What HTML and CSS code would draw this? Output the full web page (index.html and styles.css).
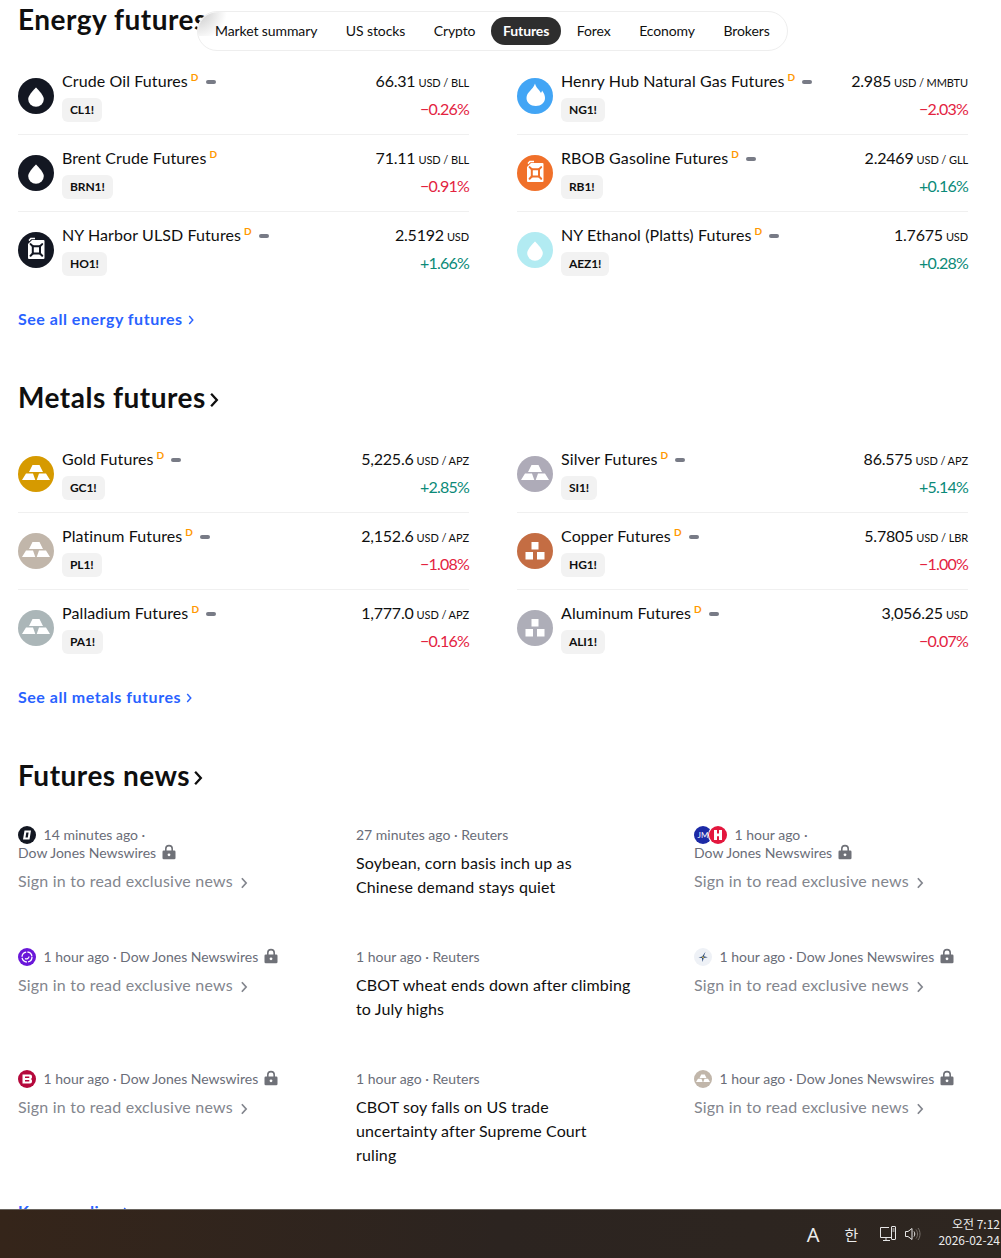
FILE: index.html
```html
<!DOCTYPE html>
<html lang="en">
<head>
<meta charset="utf-8">
<title>Futures</title>
<link rel="stylesheet" href="styles.css">
</head>
<body>
<svg class="defs" width="0" height="0">
	<symbol id="drop" viewBox="0 0 36 36">
		<circle cx="18" cy="18" r="18" fill="currentColor"/>
		<path fill="#fff" d="M18 9.500C18 9.500 25.800 16.800 25.800 21A7.800 7.800 0 0 1 10.200 21C10.200 16.800 18 9.500 18 9.500Z"/>
	</symbol>
	<symbol id="flame" viewBox="0 0 36 36">
		<circle cx="18" cy="18" r="18" fill="currentColor"/>
		<path fill="#fff" d="M18 5.500C19 10 22 11 24 15C24.500 14 25 13.500 25 12.500C27 15 28 17.500 28 20C28 24.500 24 28 18.800 28C13.500 28 9.500 24.500 9.500 20C9.500 14 16 12 18 5.500Z"/>
	</symbol>
	<symbol id="can" viewBox="0 0 36 36">
		<circle cx="18" cy="18" r="18" fill="currentColor"/>
		<path fill="#fff" d="M14 8H25.500A1 1 0 0 1 26.500 9V26A1 1 0 0 1 25.500 27H11A1 1 0 0 1 10 26V12Z"/>
		<path fill="#fff" d="M10.500 8L12.500 5.800H17V7.200H13.200L11.500 9.200Z"/>
		<g fill="none" stroke="currentColor" stroke-width="2">
			<path d="M14.800 14.300H22V21.500H14.800Z"/>
			<path d="M14.800 14.300L12.600 12.100M22 14.300L24.200 12.100M14.800 21.500L12.600 23.700M22 21.500L24.200 23.700" stroke-linecap="round"/>
		</g>
	</symbol>
	<symbol id="bars" viewBox="0 0 36 36">
		<circle cx="18" cy="18" r="18" fill="currentColor"/>
		<path fill="#fff" d="M14.500 9H21.500L25 16H11ZM8 17.500H15L17.300 24H4ZM21 17.500H28L32 24H18.700Z"/>
	</symbol>
	<symbol id="blocks" viewBox="0 0 36 36">
		<circle cx="18" cy="18" r="18" fill="currentColor"/>
		<path fill="#fff" d="M14.500 9H21.500V16.500H14.500ZM8.500 19H16V26.500H8.500ZM20 19H27.500V26.500H20Z"/>
	</symbol>
	<symbol id="lock" viewBox="0 0 14 16">
		<path fill="#6f7178" d="M3 6.500V4.800A4 4 0 0 1 11 4.800V6.500H12.200A1.300 1.300 0 0 1 13.500 7.800V14A1.300 1.300 0 0 1 12.200 15.300H1.800A1.300 1.300 0 0 1 .5 14V7.800A1.300 1.300 0 0 1 1.800 6.500ZM4.600 6.500H9.400V4.800A2.400 2.400 0 0 0 4.600 4.800Z"/>
		<circle cx="7" cy="10.800" r="1.400" fill="#fff"/>
	</symbol>
	<symbol id="chev" viewBox="0 0 8 14">
		<path fill="none" stroke="currentColor" stroke-width="2" d="M1.500 1.500L6.500 7L1.500 12.500"/>
	</symbol>
</svg>

<main class="page">
	<h2 class="heading">Energy futures<svg class="heading-arrow"><use href="#chev"/></svg></h2>
	<div class="rows">
		<div class="row">
			<svg class="icon c-black"><use href="#drop"/></svg>
			<div class="info">
				<div class="name-line"><span class="name">Crude Oil Futures</span><sup class="delay">D</sup><i class="dash"></i></div>
				<span class="chip">CL1!</span>
			</div>
			<div class="nums">
				<div class="price">66.31<span class="unit">USD / BLL</span></div>
				<div class="change down">−0.26%</div>
			</div>
		</div>
		<div class="row">
			<svg class="icon c-blue"><use href="#flame"/></svg>
			<div class="info">
				<div class="name-line"><span class="name">Henry Hub Natural Gas Futures</span><sup class="delay">D</sup><i class="dash"></i></div>
				<span class="chip">NG1!</span>
			</div>
			<div class="nums">
				<div class="price">2.985<span class="unit">USD / MMBTU</span></div>
				<div class="change down">−2.03%</div>
			</div>
		</div>
		<div class="row">
			<svg class="icon c-black"><use href="#drop"/></svg>
			<div class="info">
				<div class="name-line"><span class="name">Brent Crude Futures</span><sup class="delay">D</sup></div>
				<span class="chip">BRN1!</span>
			</div>
			<div class="nums">
				<div class="price">71.11<span class="unit">USD / BLL</span></div>
				<div class="change down">−0.91%</div>
			</div>
		</div>
		<div class="row">
			<svg class="icon c-orange"><use href="#can"/></svg>
			<div class="info">
				<div class="name-line"><span class="name">RBOB Gasoline Futures</span><sup class="delay">D</sup><i class="dash"></i></div>
				<span class="chip">RB1!</span>
			</div>
			<div class="nums">
				<div class="price">2.2469<span class="unit">USD / GLL</span></div>
				<div class="change up">+0.16%</div>
			</div>
		</div>
		<div class="row">
			<svg class="icon c-black"><use href="#can"/></svg>
			<div class="info">
				<div class="name-line"><span class="name">NY Harbor ULSD Futures</span><sup class="delay">D</sup><i class="dash"></i></div>
				<span class="chip">HO1!</span>
			</div>
			<div class="nums">
				<div class="price">2.5192<span class="unit">USD</span></div>
				<div class="change up">+1.66%</div>
			</div>
		</div>
		<div class="row">
			<svg class="icon c-cyan"><use href="#drop"/></svg>
			<div class="info">
				<div class="name-line"><span class="name">NY Ethanol (Platts) Futures</span><sup class="delay">D</sup><i class="dash"></i></div>
				<span class="chip">AEZ1!</span>
			</div>
			<div class="nums">
				<div class="price">1.7675<span class="unit">USD</span></div>
				<div class="change up">+0.28%</div>
			</div>
		</div>
	</div>
	<a class="see-all">See all energy futures<svg class="link-arrow"><use href="#chev"/></svg></a>

	<h2 class="heading">Metals futures<svg class="heading-arrow"><use href="#chev"/></svg></h2>
	<div class="rows">
		<div class="row">
			<svg class="icon c-gold"><use href="#bars"/></svg>
			<div class="info">
				<div class="name-line"><span class="name">Gold Futures</span><sup class="delay">D</sup><i class="dash"></i></div>
				<span class="chip">GC1!</span>
			</div>
			<div class="nums">
				<div class="price">5,225.6<span class="unit">USD / APZ</span></div>
				<div class="change up">+2.85%</div>
			</div>
		</div>
		<div class="row">
			<svg class="icon c-silver"><use href="#bars"/></svg>
			<div class="info">
				<div class="name-line"><span class="name">Silver Futures</span><sup class="delay">D</sup><i class="dash"></i></div>
				<span class="chip">SI1!</span>
			</div>
			<div class="nums">
				<div class="price">86.575<span class="unit">USD / APZ</span></div>
				<div class="change up">+5.14%</div>
			</div>
		</div>
		<div class="row">
			<svg class="icon c-platinum"><use href="#bars"/></svg>
			<div class="info">
				<div class="name-line"><span class="name">Platinum Futures</span><sup class="delay">D</sup><i class="dash"></i></div>
				<span class="chip">PL1!</span>
			</div>
			<div class="nums">
				<div class="price">2,152.6<span class="unit">USD / APZ</span></div>
				<div class="change down">−1.08%</div>
			</div>
		</div>
		<div class="row">
			<svg class="icon c-copper"><use href="#blocks"/></svg>
			<div class="info">
				<div class="name-line"><span class="name">Copper Futures</span><sup class="delay">D</sup><i class="dash"></i></div>
				<span class="chip">HG1!</span>
			</div>
			<div class="nums">
				<div class="price">5.7805<span class="unit">USD / LBR</span></div>
				<div class="change down">−1.00%</div>
			</div>
		</div>
		<div class="row">
			<svg class="icon c-palladium"><use href="#bars"/></svg>
			<div class="info">
				<div class="name-line"><span class="name">Palladium Futures</span><sup class="delay">D</sup><i class="dash"></i></div>
				<span class="chip">PA1!</span>
			</div>
			<div class="nums">
				<div class="price">1,777.0<span class="unit">USD / APZ</span></div>
				<div class="change down">−0.16%</div>
			</div>
		</div>
		<div class="row">
			<svg class="icon c-alu"><use href="#blocks"/></svg>
			<div class="info">
				<div class="name-line"><span class="name">Aluminum Futures</span><sup class="delay">D</sup><i class="dash"></i></div>
				<span class="chip">ALI1!</span>
			</div>
			<div class="nums">
				<div class="price">3,056.25<span class="unit">USD</span></div>
				<div class="change down">−0.07%</div>
			</div>
		</div>
	</div>
	<a class="see-all">See all metals futures<svg class="link-arrow"><use href="#chev"/></svg></a>

	<h2 class="heading">Futures news<svg class="heading-arrow"><use href="#chev"/></svg></h2>
	<div class="news">
		<div class="story">
			<div class="meta">
				<svg class="logo" viewBox="0 0 18 18"><circle cx="9" cy="9" r="9" fill="#131722"/><path fill="#fff" d="M6.500 4.500H13L11.500 13.500H5ZM8.300 6.500L7.500 11.500H9.800L10.600 6.500Z"/></svg>
				14 minutes ago ·<br>Dow Jones Newswires<svg class="lock"><use href="#lock"/></svg>
			</div>
			<a class="locked">Sign in to read exclusive news<svg class="locked-arrow"><use href="#chev"/></svg></a>
		</div>
		<div class="story">
			<div class="meta">27 minutes ago · Reuters</div>
			<a class="title">Soybean, corn basis inch up as<br>Chinese demand stays quiet</a>
		</div>
		<div class="story">
			<div class="meta">
				<span class="logo-pair">
					<svg class="logo" viewBox="0 0 18 18"><circle cx="9" cy="9" r="9" fill="#1c2aa6"/><text x="9" y="12" class="logo-text">JM</text></svg>
					<svg class="logo logo-over" viewBox="0 0 18 18"><circle cx="9" cy="9" r="10" fill="#fff"/><circle cx="9" cy="9" r="9" fill="#e3173e"/><path fill="#fff" d="M5 4H8V7.500H10V4H13V14H10V10.200H8V14H5Z"/></svg>
				</span>
				1 hour ago ·<br>Dow Jones Newswires<svg class="lock"><use href="#lock"/></svg>
			</div>
			<a class="locked">Sign in to read exclusive news<svg class="locked-arrow"><use href="#chev"/></svg></a>
		</div>
		<div class="story">
			<div class="meta">
				<svg class="logo" viewBox="0 0 18 18"><circle cx="9" cy="9" r="9" fill="#6a17d9"/><circle cx="9" cy="9" r="5" fill="none" stroke="#fff" stroke-width="1.300" stroke-dasharray="6.500 1.300"/><path fill="none" stroke="#fff" stroke-width="1.200" d="M7 10.500C8.500 11.500 11 10.500 11 8.500"/></svg>
				1 hour ago · Dow Jones Newswires<svg class="lock"><use href="#lock"/></svg>
			</div>
			<a class="locked">Sign in to read exclusive news<svg class="locked-arrow"><use href="#chev"/></svg></a>
		</div>
		<div class="story">
			<div class="meta">1 hour ago · Reuters</div>
			<a class="title">CBOT wheat ends down after climbing<br>to July highs</a>
		</div>
		<div class="story">
			<div class="meta">
				<svg class="logo" viewBox="0 0 18 18"><circle cx="9" cy="9" r="9" fill="#eef1f6"/><path fill="#2a4a7c" d="M11.500 3.800L9.900 8.300L13.800 9.300L9.700 9.900L8.600 14L7.900 10L4.500 9.400L8.200 8.400Z"/><path fill="#d9b64a" d="M9 7.800L10.200 10.200L7.800 9.800Z"/></svg>
				1 hour ago · Dow Jones Newswires<svg class="lock"><use href="#lock"/></svg>
			</div>
			<a class="locked">Sign in to read exclusive news<svg class="locked-arrow"><use href="#chev"/></svg></a>
		</div>
		<div class="story">
			<div class="meta">
				<svg class="logo" viewBox="0 0 18 18"><circle cx="9" cy="9" r="9" fill="#b5093c"/><path fill="#fff" d="M4.500 4.500H12A2 2 0 0 1 14 6.500V7.200C14 8 13.500 8.600 12.800 9C13.500 9.400 14 10 14 10.800V11.500A2 2 0 0 1 12 13.500H4.500ZM7 6.500V8H11.300V6.500ZM7 10V11.500H11.300V10Z"/></svg>
				1 hour ago · Dow Jones Newswires<svg class="lock"><use href="#lock"/></svg>
			</div>
			<a class="locked">Sign in to read exclusive news<svg class="locked-arrow"><use href="#chev"/></svg></a>
		</div>
		<div class="story">
			<div class="meta">1 hour ago · Reuters</div>
			<a class="title">CBOT soy falls on US trade<br>uncertainty after Supreme Court<br>ruling</a>
		</div>
		<div class="story">
			<div class="meta">
				<svg class="logo c-platinum"><use href="#bars"/></svg>
				1 hour ago · Dow Jones Newswires<svg class="lock"><use href="#lock"/></svg>
			</div>
			<a class="locked">Sign in to read exclusive news<svg class="locked-arrow"><use href="#chev"/></svg></a>
		</div>
	</div>
	<a class="see-all key">Keep reading<svg class="link-arrow"><use href="#chev"/></svg></a>
</main>

<nav class="tabs">
	<a class="tab">Market summary</a>
	<a class="tab">US stocks</a>
	<a class="tab">Crypto</a>
	<a class="tab active">Futures</a>
	<a class="tab">Forex</a>
	<a class="tab">Economy</a>
	<a class="tab">Brokers</a>
</nav>

<footer class="taskbar">
	<span class="tray-letter">A</span>
	<span class="tray-han">한</span>
	<svg class="tray-net" width="18" height="18" viewBox="0 0 18 18" fill="none" stroke="#e6e6e6" stroke-width="1">
		<path d="M10 2.500H1.500V12.500H12"/>
		<path d="M4 15.500H11M7 12.500V15.500"/>
		<rect x="12.500" y="1.500" width="4" height="13" rx=".5"/>
		<path d="M13.500 4H15.500M13.500 6H15.500"/>
	</svg>
	<svg class="tray-vol" width="18" height="16" viewBox="0 0 18 16" fill="none" stroke="#e6e6e6" stroke-width="1">
		<path d="M1.500 5.500H4L8 2.500V13.500L4 10.500H1.500Z"/>
		<path d="M10 5.500C11 7 11 9 10 10.500"/>
		<path stroke="#77716c" d="M12 3.500C14 6 14 10 12 12.500M14 2C16.700 5.500 16.700 10.500 14 14"/>
	</svg>
	<div class="clock">
		<div>오전 7:12</div>
		<div>2026-02-24</div>
	</div>
</footer>
</body>
</html>
```

FILE: styles.css
```css
* {
	box-sizing: border-box;
}
body {
	margin: 0px;
	height: 1258px;
	overflow: hidden;
	position: relative;
	background-color: #fff;
	color: #0f0f0f;
	font-family: "Lato", "Noto Sans", sans-serif;
	font-size: 16px;
}
.defs {
	position: absolute;
}
.page {
	height: 1209px;
	overflow: hidden;
	padding: 2px 33px 0 18px;
}
.heading {
	height: 36px;
	margin: 0;
	font-size: 28px;
	line-height: 34px;
	font-weight: 700;
	letter-spacing: .5px;
}
.heading-arrow {
	width: 10px;
	height: 16px;
	margin-left: 3px;
}
.rows {
	display: grid;
	grid-template-columns: 1fr 1fr;
	grid-auto-rows: 77px;
	column-gap: 48px;
	margin-top: 20px;
}
.row {
	display: flex;
	padding-top: 12px;
	border-bottom: 1px solid #f0f0f0;
}
.row:nth-last-child(-n+2) {
	border-bottom: 0;
}
.icon {
	width: 36px;
	height: 36px;
	margin: 8px 8px 0 0;
	flex: none;
}
.info {
	flex: 1;
}
.name-line {
	display: flex;
	align-items: center;
	height: 24px;
	margin-top: -2px;
	letter-spacing: .1px;
}
.delay {
	align-self: flex-start;
	margin: 3px 0 0 3px;
	font-size: 10px;
	line-height: 12px;
	font-weight: 700;
	color: #ff9800;
}
.dash {
	width: 10px;
	height: 4px;
	margin: 4px 0 0 7px;
	border-radius: 2px;
	background-color: #787b86;
}
.chip {
	display: inline-block;
	height: 24px;
	margin-top: 6px;
	padding: 0 8px;
	border-radius: 6px;
	background-color: #f2f2f2;
	font-size: 12px;
	line-height: 24px;
	font-weight: 700;
	letter-spacing: -.1px;
}
.nums {
	text-align: right;
	white-space: nowrap;
}
.price {
	height: 24px;
	margin-top: -1px;
	line-height: 24px;
	letter-spacing: -.2px;
}
.unit {
	margin-left: 3px;
	font-size: 11px;
	letter-spacing: -.1px;
}
.change {
	margin-top: 4px;
	line-height: 24px;
	letter-spacing: -.8px;
}
.down {
	color: #e3233f;
}
.up {
	color: #0b8a78;
}
.c-black { color: #131722; }
.c-blue { color: #42a5f5; }
.c-orange { color: #f0702a; }
.c-cyan { color: #b2ebf2; }
.c-gold { color: #d69a00; }
.c-silver { color: #aeabb8; }
.c-platinum { color: #c1b6aa; }
.c-palladium { color: #abb6b8; }
.c-copper { color: #c46d43; }
.c-alu { color: #aeaeb8; }
.see-all {
	display: block;
	height: 24px;
	margin: 18px 0 49px;
	line-height: 24px;
	font-weight: 700;
	letter-spacing: .52px;
	color: #2962ff;
}
.link-arrow {
	width: 6px;
	height: 10px;
	margin-left: 5px;
}
.news {
	display: grid;
	grid-template-columns: repeat(3, 290px);
	grid-auto-rows: 122px;
	column-gap: 48px;
	margin-top: 32px;
}
.story {
	min-width: 0;
}
.meta {
	font-size: 14px;
	line-height: 18px;
	color: #6a6d78;
	white-space: nowrap;
}
.logo {
	width: 18px;
	height: 18px;
	margin-right: 4px;
	vertical-align: top;
}
.logo-pair {
	display: inline-block;
	width: 37px;
	height: 18px;
	vertical-align: top;
	white-space: nowrap;
}
.logo-pair .logo {
	margin-right: 0;
}
.logo-pair .logo-over {
	margin-left: -7px;
	overflow: visible;
}
.logo-text {
	font-size: 8px;
	fill: #fff;
	text-anchor: middle;
}
.lock {
	width: 14px;
	height: 16px;
	margin-left: 6px;
	vertical-align: top;
}
.locked {
	display: block;
	margin-top: 7px;
	line-height: 24px;
	color: #83868e;
	letter-spacing: .2px;
	white-space: nowrap;
}
.locked-arrow {
	width: 8px;
	height: 12px;
	margin-left: 7px;
	vertical-align: -2px;
}
.title {
	display: block;
	margin-top: 7px;
	line-height: 24px;
	letter-spacing: .12px;
}
.key {
	margin-top: 7px;
}
.tabs {
	position: absolute;
	left: 197px;
	top: 11px;
	width: 591px;
	height: 40px;
	display: flex;
	align-items: center;
	gap: 2.5px;
	padding: 0 4px;
	border: 1px solid #eeeeee;
	border-radius: 20px;
	background-color: #fff;
}
.tabs::before {
	content: "";
	position: absolute;
	left: 0;
	top: 0;
	width: 30px;
	height: 24px;
	border-radius: 20px 0 0 0;
	background: radial-gradient(circle at 0 0, #c9c9c9, #fff 75%);
}
.tab {
	position: relative;
	height: 28px;
	padding: 0 13px;
	border-radius: 14px;
	font-size: 14px;
	line-height: 28px;
	letter-spacing: -.1px;
	white-space: nowrap;
}
.tab.active {
	padding: 0 12px;
	background-color: #2e2e2e;
	color: #fff;
	font-weight: 700;
}
.taskbar {
	height: 49px;
	display: flex;
	align-items: center;
	justify-content: flex-end;
	border-top: 1px solid #6a6560;
	background: linear-gradient(90deg, #35251a 0%, #2c2420 50%, #2e2620 100%);
	color: #ececec;
	font-family: "Noto Sans CJK KR", "Noto Sans", sans-serif;
}
.tray-letter {
	margin-right: 25px;
	font-family: "Noto Sans", sans-serif;
	font-size: 20px;
}
.tray-han {
	margin-right: 21px;
	font-size: 15px;
}
.tray-net {
	margin-right: 7px;
}
.tray-vol {
	margin-right: 16px;
}
.clock {
	margin-bottom: 4px;
	padding-right: 1px;
	font-size: 12px;
	line-height: 16px;
	text-align: right;
	white-space: nowrap;
}
```
